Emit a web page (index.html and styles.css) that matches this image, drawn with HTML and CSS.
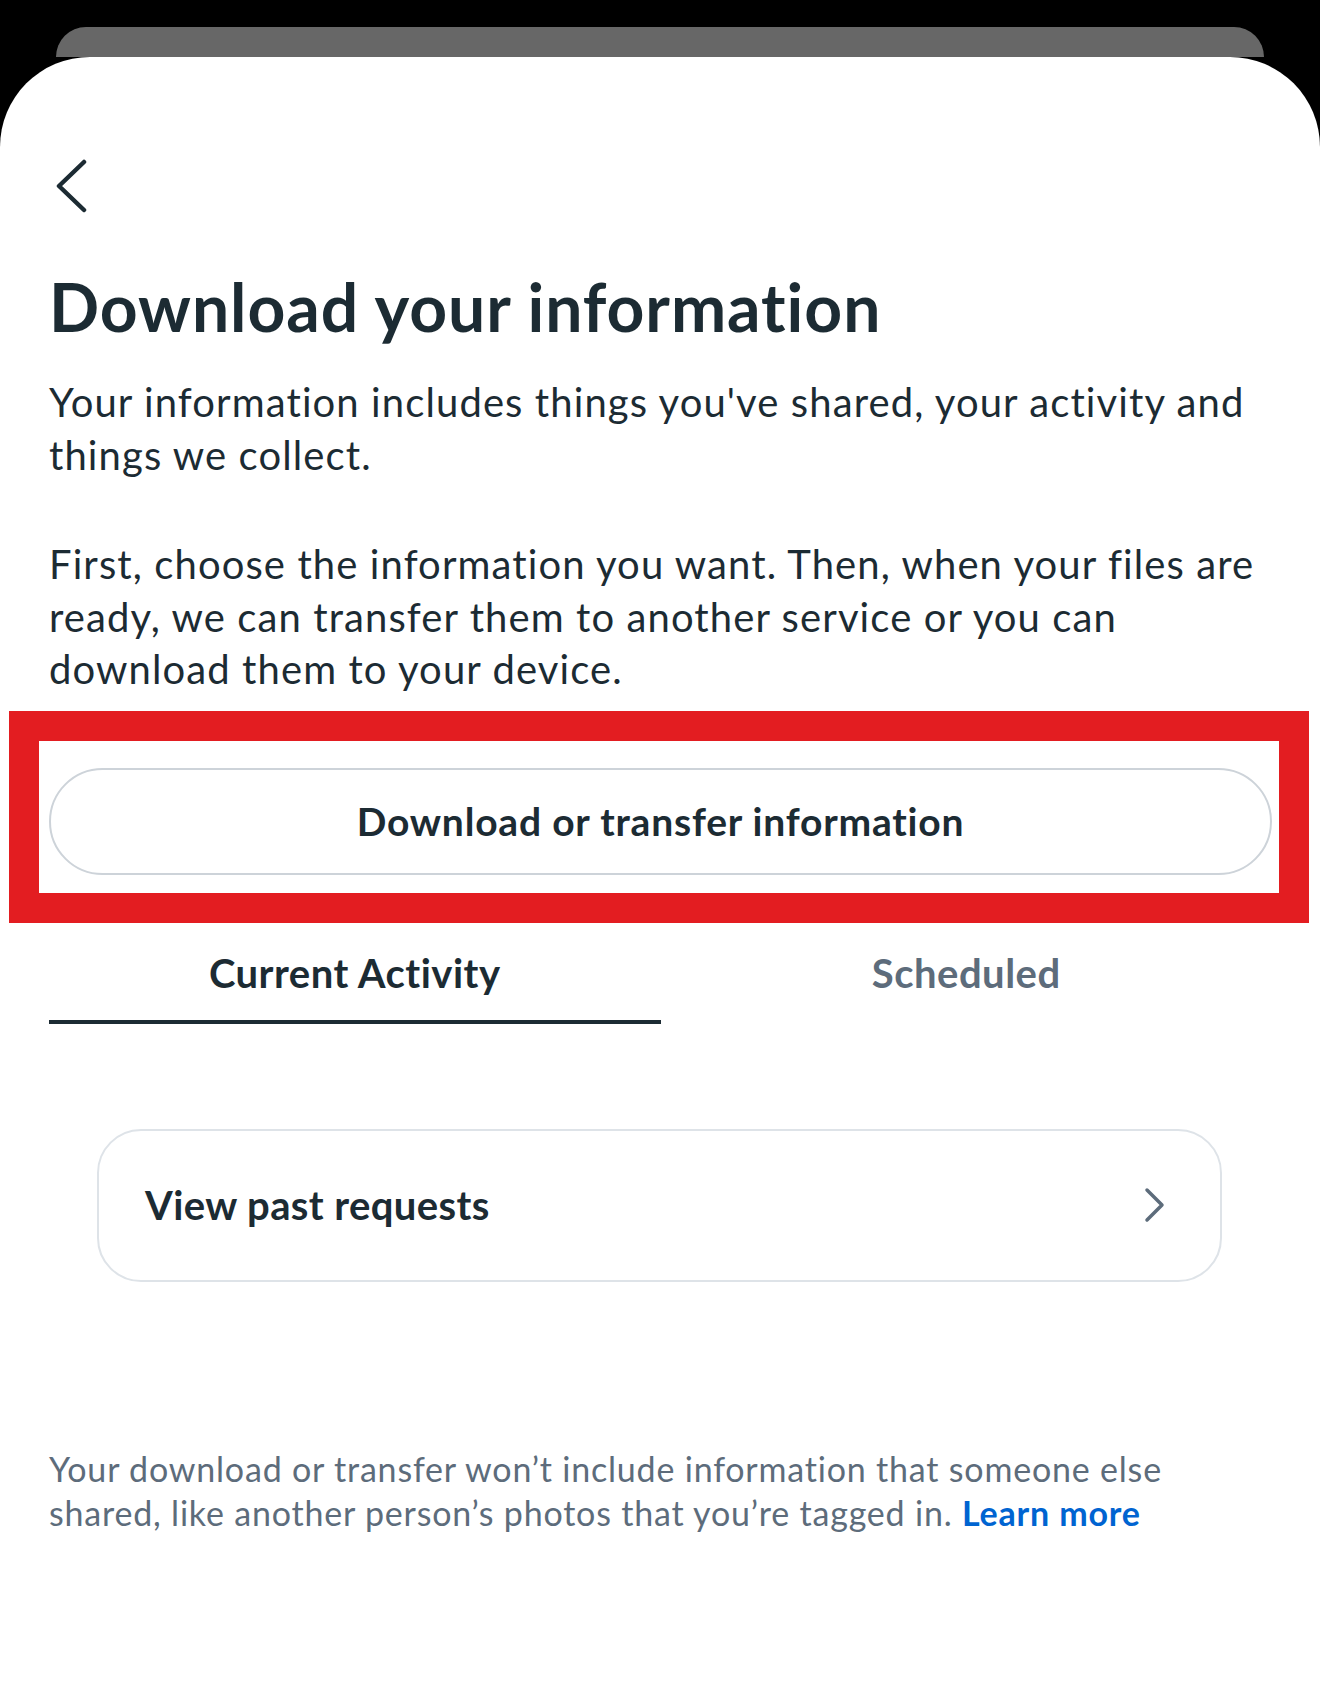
FILE: index.html
```html
<!DOCTYPE html>
<html lang="en">
<head>
    <meta charset="UTF-8">
    <title>Download your information</title>
    <link rel="stylesheet" href="styles.css">
</head>
<body>
<div class="behind"></div>
<div class="sheet">
    <div class="top-bar">
        <svg class="back" width="40" height="56" viewBox="0 0 40 56">
            <polyline points="29,3 4,27 29,51" fill="none" stroke="#1c2b33" stroke-width="4.5" stroke-linecap="round" stroke-linejoin="round"/>
        </svg>
    </div>

    <h1 class="title">Download your information</h1>

    <p class="text">Your information includes things you've shared, your activity and things we collect.</p>
    <p class="text">First, choose the information you want. Then, when your files are ready, we can transfer them to another service or you can download them to your device.</p>

    <div class="action">
        <div class="btn">Download or transfer information</div>
        <!-- annotation frame -->
        <div class="mark"></div>
    </div>

    <div class="tabs">
        <div class="tab current">Current Activity</div>
        <div class="tab">Scheduled</div>
    </div>

    <div class="card">
        <span>View past requests</span>
        <svg width="22" height="36" viewBox="0 0 22 36">
            <polyline points="3,3 18,18 3,33" fill="none" stroke="#5d6c7b" stroke-width="3.5" stroke-linecap="round" stroke-linejoin="round"/>
        </svg>
    </div>

    <p class="note">Your download or transfer won’t include information that someone else shared, like another person’s photos that you’re tagged in. <a href="#">Learn more</a></p>
</div>
</body>
</html>
```

FILE: styles.css
```css
* {
    padding: 0;
    margin: 0;
    box-sizing: border-box;
}

body {
    background: #000;
    font-family: Lato, "Liberation Sans", sans-serif;
    color: #1c2b33;
    width: 1320px;
    height: 1683px;
    overflow: hidden;
    padding-top: 27px;
}

.behind {
    height: 30px;
    margin: 0 56px;
    background: #676767;
    border-radius: 36px 36px 0 0;
}

.sheet {
    background: #fff;
    border-radius: 90px 90px 0 0;
    height: 1626px;
    padding: 102px 48px 0 49px;
}

.top-bar {
    height: 56px;
    padding-left: 6px;
}

.back {
    display: block;
}

.title {
    font-size: 66px;
    font-weight: 700;
    line-height: 80px;
    margin-top: 52px;
    letter-spacing: 0.95px;
}

.text {
    font-size: 40px;
    line-height: 52.5px;
    margin-top: 29px;
    letter-spacing: 1.1px;
}

.text + .text {
    margin-top: 57px;
}

.action {
    position: relative;
    margin-top: 72px;
}

.btn {
    height: 107px;
    border: 2px solid #cdd3d9;
    border-radius: 54px;
    display: flex;
    align-items: center;
    justify-content: center;
    font-size: 39px;
    font-weight: 700;
    letter-spacing: 0.8px;
}

.mark {
    position: absolute;
    left: -40px;
    right: -37px;
    top: -57px;
    bottom: -48px;
    border: 30px solid #e31d21;
}

.tabs {
    display: flex;
    margin-top: 48px;
}

.tab {
    flex: 1;
    text-align: center;
    font-size: 40px;
    font-weight: 700;
    line-height: 52px;
    padding: 24px 0 21px;
    color: #5d6c7b;
    letter-spacing: 0.5px;
    border-bottom: 4px solid transparent;
}

.tab.current {
    color: #1c2b33;
    border-bottom-color: #1c2b33;
}

.card {
    margin: 105px 50px 0 48px;
    height: 153px;
    border: 2px solid #dee3e8;
    border-radius: 44px;
    display: flex;
    align-items: center;
    justify-content: space-between;
    padding: 0 54px 0 46px;
    font-size: 40px;
    font-weight: 700;
    letter-spacing: 0.4px;
}

.note {
    margin-top: 165px;
    padding-right: 60px;
    font-size: 34px;
    line-height: 44px;
    letter-spacing: 0.8px;
    color: #5d6c7b;
}

.note a {
    color: #0064d1;
    font-weight: 700;
    text-decoration: none;
}
```
